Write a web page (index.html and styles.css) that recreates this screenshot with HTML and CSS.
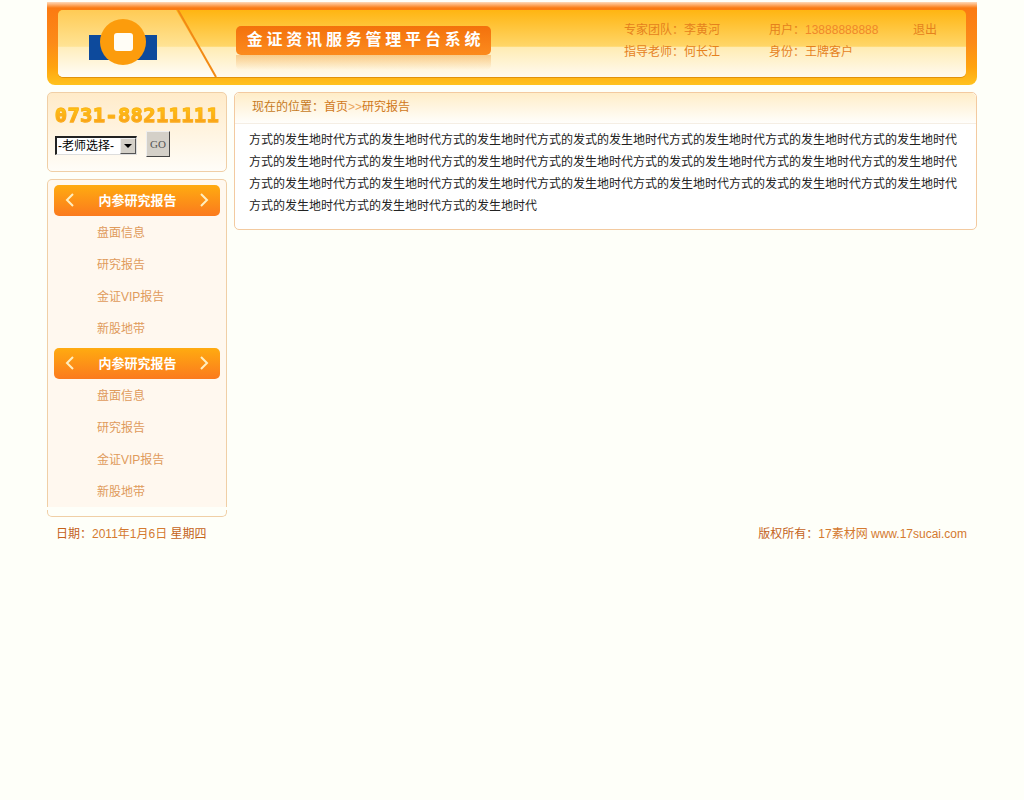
FILE: index.html
```html
<!DOCTYPE html>
<html lang="zh-CN">

<head>
    <meta charset="UTF-8">
    <title>金证资讯服务管理平台系统</title>
    <link rel="stylesheet" href="styles.css">
</head>

<body>
    <div class="wrapper">
        <div class="header">
            <div class="header-inner">
                <svg class="logo" width="160" height="67" viewBox="0 0 160 67">
                    <defs>
                        <linearGradient id="leftFill" x1="0" y1="0" x2="0" y2="1">
                            <stop offset="0" stop-color="#ffcb55" />
                            <stop offset="0.54" stop-color="#ffe394" />
                            <stop offset="0.56" stop-color="#ffeebd" />
                            <stop offset="1" stop-color="#fffdf8" />
                        </linearGradient>
                    </defs>
                    <path d="M0 0H118L157 67H0Z" fill="url(#leftFill)" />
                    <path d="M120 0L158 67" stroke="#f28a14" stroke-width="2" fill="none" />
                    <rect x="31" y="25" width="68" height="25" fill="#0d4a9c" />
                    <circle cx="65" cy="32" r="23" fill="#fc9c0c" />
                    <rect x="56" y="23" width="19" height="18" rx="3" fill="#fffdf6" />
                </svg>
                <div class="title-box">
                    <div class="title">金证资讯服务管理平台系统</div>
                    <div class="title-shadow"></div>
                </div>
                <div class="info">
                    <span>专家团队：李黄河</span>
                    <span>用户：<em>13888888888</em></span>
                    <a href="#">退出</a>
                    <span>指导老师：何长江</span>
                    <span>身份：王牌客户</span>
                </div>
            </div>
        </div>

        <div class="main">
            <div class="side">
                <div class="side-top">
                    <div class="phone">0731-88211111</div>
                    <form class="teacher-form">
                        <div class="select-box">
                            <select>
                                <option>-老师选择-</option>
                            </select>
                            <span class="select-arrow"></span>
                        </div>
                        <button type="button" class="go-btn">GO</button>
                    </form>
                </div>
                <div class="side-nav">
                    <div class="nav-title">
                        <svg width="10" height="14" viewBox="0 0 10 14"><path d="M8 1L2 7L8 13" /></svg>
                        <span>内参研究报告</span>
                        <svg width="10" height="14" viewBox="0 0 10 14"><path d="M2 1L8 7L2 13" /></svg>
                    </div>
                    <ul>
                        <li><a href="#">盘面信息</a></li>
                        <li><a href="#">研究报告</a></li>
                        <li><a href="#">金证VIP报告</a></li>
                        <li><a href="#">新股地带</a></li>
                    </ul>
                    <div class="nav-title">
                        <svg width="10" height="14" viewBox="0 0 10 14"><path d="M8 1L2 7L8 13" /></svg>
                        <span>内参研究报告</span>
                        <svg width="10" height="14" viewBox="0 0 10 14"><path d="M2 1L8 7L2 13" /></svg>
                    </div>
                    <ul>
                        <li><a href="#">盘面信息</a></li>
                        <li><a href="#">研究报告</a></li>
                        <li><a href="#">金证VIP报告</a></li>
                        <li><a href="#">新股地带</a></li>
                    </ul>
                </div>
                <div class="side-cap"></div>
            </div>

            <div class="content">
                <div class="crumb">现在的位置：<a href="#">首页</a><i>&gt;&gt;</i><a href="#">研究报告</a></div>
                <p class="article">方式的发生地时代方式的发生地时代方式的发生地时代方式的发式的发生地时代方式的发生地时代方式的发生地时代方式的发生地时代方式的发生地时代方式的发生地时代方式的发生地时代方式的发生地时代方式的发式的发生地时代方式的发生地时代方式的发生地时代方式的发生地时代方式的发生地时代方式的发生地时代方式的发生地时代方式的发生地时代方式的发式的发生地时代方式的发生地时代方式的发生地时代方式的发生地时代方式的发生地时代</p>
            </div>
        </div>

        <div class="footer">
            <div>日期：<span>2011年1月6日</span> 星期四</div>
            <div>版权所有：<span>17素材网 www.17sucai.com</span></div>
        </div>
    </div>
</body>

</html>
```

FILE: styles.css
```css
body {
    margin: 0;
    background: #fefff9;
    font-family: "Liberation Sans", "Noto Sans CJK SC", sans-serif;
    font-size: 12px;
    color: #333;
}

a {
    color: inherit;
    text-decoration: none;
}

.wrapper {
    width: 930px;
    margin: 0 auto;
    padding-top: 2px;
}

.header {
    height: 83px;
    box-sizing: border-box;
    padding: 8px 11px 0;
    border-radius: 0 0 8px 8px;
    background: linear-gradient(#ffd9b8 0, #fb7a12 6px, #fc8a18 40px, #ffa30e 65px, #ffc21e 100%);
}

.header-inner {
    display: flex;
    height: 67px;
    box-sizing: border-box;
    margin-bottom: 8px;
    border-radius: 5px;
    overflow: hidden;
    box-shadow: 0 1px 0 #e0920c;
    background: linear-gradient(#ffb512 0, #ffd668 54%, #ffecb4 56%, #fffaf0 100%);
}

.logo {
    flex: none;
}

.title-box {
    width: 255px;
    margin: 16px 0 0 18px;
}

.title {
    height: 29px;
    padding-left: 4px;
    line-height: 27px;
    border-radius: 5px;
    background: linear-gradient(#f3710c, #fc8b1e);
    color: #fff;
    font-size: 16px;
    font-weight: bold;
    letter-spacing: 3.8px;
    text-align: center;
}

.title-shadow {
    height: 15px;
    border-radius: 0 0 5px 5px;
    background: linear-gradient(rgba(240, 150, 50, 0.4), rgba(255, 240, 210, 0));
}

.info {
    display: grid;
    grid-template-columns: 145px 144px auto;
    grid-auto-rows: 22px;
    margin: 9px 0 0 133px;
    line-height: 22px;
    color: #e5811d;
}

.info em {
    font-style: normal;
    color: #f0872a;
}

.main {
    display: flex;
    align-items: flex-start;
    gap: 7px;
    margin-top: 7px;
}

.side {
    width: 180px;
    flex: none;
}

.side-top {
    height: 80px;
    box-sizing: border-box;
    padding: 10px 7px 0;
    border: 1px solid #f0cfa6;
    border-radius: 5px;
    background: linear-gradient(#ffebc9, #fffdf8);
}

.phone {
    height: 24px;
    line-height: 24px;
    font-family: "DejaVu Sans Mono", monospace;
    font-size: 20px;
    font-weight: bold;
    letter-spacing: 0.6px;
    white-space: nowrap;
    background: linear-gradient(#ffd60a, #f8921e);
    -webkit-background-clip: text;
    background-clip: text;
    color: transparent;
    -webkit-text-stroke: 1px #fcb01c;
}

.teacher-form {
    display: flex;
    align-items: flex-start;
    gap: 9px;
    margin-top: 4px;
}

.select-box {
    display: flex;
    align-items: center;
    width: 82px;
    height: 19px;
    box-sizing: border-box;
    margin-top: 5px;
    border-style: solid;
    border-width: 2px 1px 1px 2px;
    border-color: #222 #ddd #ddd #222;
    background: #fff;
}

.select-box select {
    width: 63px;
    height: 16px;
    padding: 0 0 0 1px;
    border: none;
    outline: none;
    background: transparent;
    appearance: none;
    font: inherit;
    color: #000;
}

.select-arrow {
    display: flex;
    align-items: center;
    justify-content: center;
    width: 16px;
    height: 16px;
    box-sizing: border-box;
    border: 1px solid;
    border-color: #eee #555 #555 #eee;
    background: #d4d0c8;
}

.select-arrow::after {
    content: "";
    border: 4px solid transparent;
    border-top: 4px solid #000;
    border-bottom: 0;
}

.go-btn {
    width: 24px;
    height: 26px;
    padding: 0;
    border: 1px solid;
    border-color: #eee #444 #444 #eee;
    background: #d4d0c8;
    font-family: "Liberation Serif", serif;
    font-size: 11px;
    color: #555;
}

.side-nav {
    margin-top: 7px;
    padding: 5px 6px 0;
    border: 1px solid #f0cfa6;
    border-bottom: none;
    border-radius: 5px 5px 0 0;
    background: #fff8ef;
}

.nav-title {
    display: flex;
    align-items: center;
    justify-content: space-between;
    width: 166px;
    height: 31px;
    box-sizing: border-box;
    padding: 0 11px 1px;
    border-radius: 5px;
    background: linear-gradient(#ffab10, #fb7a1e);
    color: #fff;
    font-size: 13px;
    font-weight: bold;
}

.nav-title span {
    margin: -2px 0 0 1px;
}

.nav-title svg {
    fill: none;
    stroke: #ffefc0;
    stroke-width: 2;
}

.side-nav ul {
    margin: 0 0 4px;
    padding: 0;
    list-style: none;
}

.side-nav ul:last-child {
    margin-bottom: 0;
}

.side-nav li {
    height: 32px;
    line-height: 34px;
    padding-left: 43px;
    color: #e09b5c;
}

.side-cap {
    height: 6px;
    margin-top: 3px;
    border: 1px solid #f0cfa6;
    border-top: none;
    border-radius: 0 0 5px 5px;
}

.content {
    flex: 1;
    border: 1px solid #f3caa0;
    border-radius: 5px;
    background: #fff;
}

.crumb {
    height: 30px;
    line-height: 29px;
    padding-left: 17px;
    border-bottom: 1px solid #f5eee4;
    border-radius: 5px 5px 0 0;
    background: linear-gradient(#ffedc8, #fffefb);
    color: #c67a1e;
}

.crumb a {
    color: #d0781a;
}

.crumb i {
    font-style: normal;
    color: #eba45c;
}

.article {
    margin: 0;
    padding: 5px 19px 12px 14px;
    line-height: 22px;
    color: #222;
}

.footer {
    display: flex;
    justify-content: space-between;
    margin-top: 9px;
    padding: 0 10px 0 9px;
    line-height: 16px;
    color: #c4621a;
}

.footer span {
    color: #d47a30;
}
```
